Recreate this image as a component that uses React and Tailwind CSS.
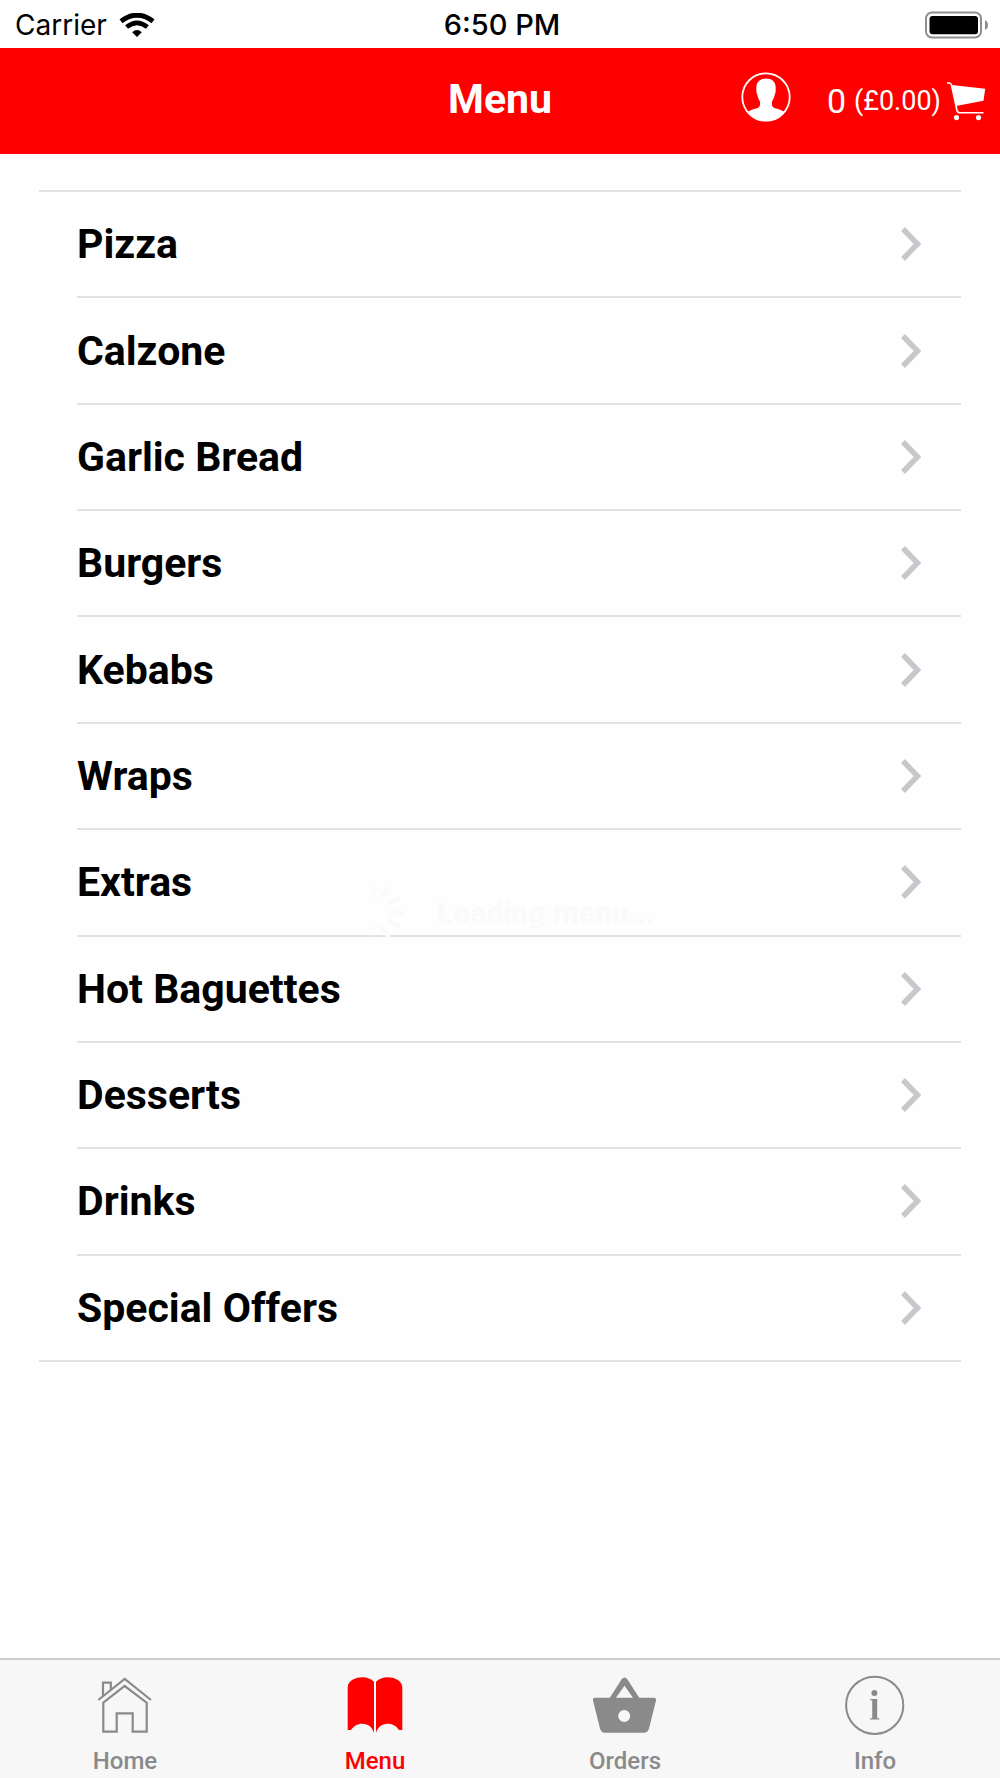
const CATEGORIES = [
  'Pizza',
  'Calzone',
  'Garlic Bread',
  'Burgers',
  'Kebabs',
  'Wraps',
  'Extras',
  'Hot Baguettes',
  'Desserts',
  'Drinks',
  'Special Offers',
]

const TABS = [
  { label: 'Home', icon: HomeIcon },
  { label: 'Menu', icon: BookIcon },
  { label: 'Orders', icon: BasketIcon },
  { label: 'Info', icon: InfoIcon },
]

function WifiIcon() {
  return (
    <svg className="w-9 h-6" viewBox="0 0 36 24" fill="none" stroke="#000" aria-hidden="true">
      <path d="M2 8.2 Q18 -3.8 34 8.2" strokeWidth="5" />
      <path d="M7.6 14 Q18 5.6 28.4 14" strokeWidth="4.6" />
      <path d="M13.2 19.2 Q18 14.6 22.8 19.2 L18 24 Z" fill="#000" stroke="none" />
    </svg>
  )
}

function BatteryIcon() {
  return (
    <svg className="w-16 h-7" viewBox="0 0 64 28" aria-hidden="true">
      <rect x="1" y="1.5" width="55" height="25" rx="6" fill="none" stroke="#8e8e8e" strokeWidth="2" />
      <rect x="4.5" y="5" width="48.5" height="18.2" rx="3" fill="#000" />
      <path d="M60 9 Q63 10.5 63 14 Q63 17.5 60 19 Z" fill="#8e8e8e" />
    </svg>
  )
}

function AvatarIcon() {
  return (
    <svg className="w-[50px] h-[50px]" viewBox="0 0 50 50" aria-hidden="true">
      <circle cx="25" cy="25" r="23.7" fill="none" stroke="#fff" strokeWidth="1.8" />
      <path
        fill="#fff"
        d="M25 6.5 C31 6.5 35 10 34.6 16 C34.8 17.5 34.8 21 33.8 22.5 C33.2 25.5 32 28 31 29.5 C30.6 32 31 34.5 32.5 35.5 C35 36.8 40 37.5 43.5 40 C39 46 32.5 49 25 49 C17.5 49 11 46 6.5 40 C10 37.5 15 36.8 17.5 35.5 C19 34.5 19.4 32 19 29.5 C18 28 16.8 25.5 16.2 22.5 C15.2 21 15.2 17.5 15.4 16 C15 10 19 6.5 25 6.5 Z"
      />
    </svg>
  )
}

function CartIcon() {
  return (
    <svg className="w-[39px] h-[39px]" viewBox="0 0 39 39" fill="#fff" aria-hidden="true">
      <path d="M0 1 H2.2 Q4 1 4.5 3 L10 28.5 Q10.6 30.8 13 30.8 H36.5" fill="none" stroke="#fff" strokeWidth="1.6" />
      <path d="M4.7 3 L38.2 6.7 L36.5 18.7 L9 24 Z" />
      <circle cx="9.5" cy="35.6" r="2.6" />
      <circle cx="31.5" cy="35.6" r="2.6" />
    </svg>
  )
}

function Chevron() {
  return (
    <svg className="w-5 h-9" viewBox="0 0 20 36" fill="none" stroke="#c7c7cc" strokeWidth="5.4" aria-hidden="true">
      <path d="M2 3 L16.5 18 L2 33" />
    </svg>
  )
}

function HomeIcon() {
  return (
    <svg className="w-16 h-[62px]" viewBox="0 0 64 62" fill="none" stroke="currentColor" strokeWidth="2.2" aria-hidden="true">
      <path d="M10 21 V7.7 H17.8 V14.5" />
      <path d="M5.3 25 L31.7 4 L58 25" />
      <path d="M10.3 27.7 L31.7 11 L53.7 27.7 V56.7 H39.7 V38.3 H23.7 V56.7 H10.3 Z" />
    </svg>
  )
}

function BookIcon() {
  return (
    <svg className="w-16 h-[62px]" viewBox="0 0 64 62" fill="currentColor" aria-hidden="true">
      <path d="M31 6.8 C28 3.8 24 2.3 19.5 2.3 C12.5 2.3 4.7 5.5 4.7 12.5 V55 H8 C10.5 51 14.5 48.7 19 48.7 C25.5 48.7 29.5 52.5 31 57.8 Z" />
      <path d="M33 6.8 C36 3.8 40 2.3 44.5 2.3 C51.5 2.3 59.3 5.5 59.3 12.5 V55 H56 C53.5 51 49.5 48.7 45 48.7 C38.5 48.7 34.5 52.5 33 57.8 Z" />
    </svg>
  )
}

function BasketIcon() {
  return (
    <svg className="w-16 h-[62px]" viewBox="0 0 64 62" fill="currentColor" fillRule="evenodd" aria-hidden="true">
      <path d="M28.8 4 Q31.5 0.8 34.2 4 L46.2 22.7 H61 Q63.4 22.7 63 25.5 L56 53.5 Q54.8 57.7 51 57.7 H12 Q8.2 57.7 7 53.5 L0 25.5 Q-0.4 22.7 2 22.7 H16.8 Z M31.5 10.7 L23 22.7 H40 Z M31.2 35 A6 6 0 1 0 31.2 47 A6 6 0 1 0 31.2 35 Z" />
    </svg>
  )
}

function InfoIcon() {
  return (
    <svg className="w-16 h-[62px]" viewBox="0 0 64 62" fill="currentColor" aria-hidden="true">
      <circle cx="31.7" cy="30.3" r="28.6" fill="none" stroke="currentColor" strokeWidth="2" />
      <circle cx="31.4" cy="18" r="3" />
      <path d="M27.3 24 H34.2 V43 L36.4 43.4 V44.6 H27 V43.4 L29.2 43 V25.4 L27.3 25.2 Z" />
    </svg>
  )
}

function Spinner() {
  return (
    <svg className="w-[60px] h-[60px]" viewBox="0 0 60 60" stroke="currentColor" strokeWidth="4" aria-hidden="true">
      <path d="M37 15 L43 4 M42 22 L54 14 M45 30 H59 M42 37 L54 44 M36 43 L44 55" />
      <path d="M30 0 V14 M29 44 V58" strokeWidth="1" />
    </svg>
  )
}

function StatusBar() {
  return (
    <div className="grid grid-cols-[1fr_auto_1fr] items-center h-12 pt-0.5 pl-[15px] pr-[11px] bg-white font-['Inter',sans-serif] text-[28px] leading-8 text-black">
      <div className="flex items-center gap-3">
        <span>Carrier</span>
        <WifiIcon />
      </div>
      <span className="text-[29px] font-medium">6:50 PM</span>
      <div className="flex justify-end">
        <BatteryIcon />
      </div>
    </div>
  )
}

function NavBar() {
  return (
    <header className="grid grid-cols-[1fr_auto_1fr] items-center h-[106px] pb-1 pl-3.5 pr-3.5 bg-[#ff0000] text-white">
      <h1 className="col-start-2 text-[41px] leading-12 font-bold">Menu</h1>
      <div className="flex items-center justify-end gap-9">
        <button type="button" aria-label="Account" className="pb-1">
          <AvatarIcon />
        </button>
        <button type="button" aria-label="Basket" className="flex items-center gap-1.5 pt-1">
          <span className="pr-0.5 text-[34px] leading-10">0</span>
          <span className="text-[27px] leading-10">(£0.00)</span>
          <CartIcon />
        </button>
      </div>
    </header>
  )
}

function MenuRow({ name, last }) {
  return (
    <li className={last ? 'flex flex-1' : 'flex flex-1 ml-[38px] border-b-2 border-[#e2e2e4]'}>
      <button
        type="button"
        className={
          last
            ? 'flex flex-1 items-center justify-between pl-[38px] pr-10 text-left'
            : 'flex flex-1 items-center justify-between pr-10 text-left'
        }
      >
        <span>{name}</span>
        <Chevron />
      </button>
    </li>
  )
}

export default function App() {
  return (
    <div className="flex flex-col min-h-screen bg-[#fefefe] font-['Roboto',sans-serif]">
      <StatusBar />
      <NavBar />

      <main className="relative flex-1 px-[39px] pt-9">
        <ul className="flex flex-col min-h-[1172px] border-y-2 border-[#e2e2e4] text-[41px] leading-12 font-bold text-black">
          {CATEGORIES.map((name, i) => (
            <MenuRow key={name} name={name} last={i === CATEGORIES.length - 1} />
          ))}
        </ul>

        {/* loading toast, at the end of its fade out */}
        <div className="absolute inset-0 flex items-center justify-center gap-8 pt-3.5 pointer-events-none text-[30px] leading-9 font-bold text-[#fafafa]">
          <Spinner />
          <span>Loading menu...</span>
        </div>
      </main>

      <nav className="grid grid-cols-4 h-[120px] border-t-2 border-[#cbcbcb] bg-[#f7f7f7]">
        {TABS.map(({ label, icon: Icon }) => (
          <a
            key={label}
            href={'#' + label.toLowerCase()}
            className={
              label === 'Menu'
                ? 'flex flex-col items-center gap-2 pt-[15px] text-2xl leading-8 font-medium text-[#ff0000]'
                : 'flex flex-col items-center gap-2 pt-[15px] text-2xl leading-8 font-medium text-[#8a8a8a]'
            }
          >
            <Icon />
            <span>{label}</span>
          </a>
        ))}
      </nav>
    </div>
  )
}
